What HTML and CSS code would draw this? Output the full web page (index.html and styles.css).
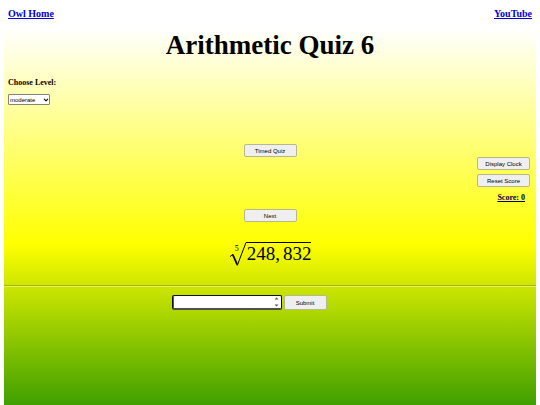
FILE: index.html
```html
<!DOCTYPE html>
<html lang="en">
<head>
<meta charset="utf-8">
<title>Arithmetic Quiz 6</title>
<link rel="stylesheet" href="styles.css">
</head>
<body>
<nav class="top-links">
  <a href="#home">Owl Home</a>
  <a href="#youtube">YouTube</a>
</nav>
<main>
  <h1>Arithmetic Quiz 6</h1>
  <div class="level">
    <label for="level">Choose Level:</label>
    <div class="select-wrap">
      <select id="level"><option>easy</option><option selected>moderate</option><option>hard</option></select>
      <svg class="chevron" viewBox="0 0 6 4" aria-hidden="true"><path d="M1 .8 3 2.8 5 .8"/></svg>
    </div>
  </div>
  <section class="board">
    <div class="quiz">
      <button type="button">Timed Quiz</button>
      <button type="button">Next</button>
    </div>
    <aside class="score-panel">
      <button type="button">Display Clock</button>
      <button type="button">Reset Score</button>
      <p class="score">Score: 0</p>
    </aside>
  </section>
  <div class="problem">
    <div class="root">
      <span class="index">5</span>
      <svg class="radical" viewBox="0 0 18 25" aria-hidden="true"><path class="thin" d="M1 14.6 4 12.2M8.2 23.6 17 .5H18"/><path class="thick" d="M3.8 12.6 8.2 22.6"/></svg>
      <span class="radicand">248,<span class="group">832</span></span>
    </div>
  </div>
  <hr>
  <form class="answer">
    <div class="number-wrap">
      <input type="number" aria-label="Answer">
      <svg class="spinner" viewBox="0 0 5 10" aria-hidden="true"><path d="M.5 2.4 2.5.5 4.5 2.4zM.5 7.6 2.5 9.5 4.5 7.6z"/></svg>
    </div>
    <button type="button">Submit</button>
  </form>
</main>
</body>
</html>
```
FILE: styles.css
```css
* {
  box-sizing: border-box;
}

html {
  min-height: 100%;
  background: #fff;
}

body {
  margin: 0 4px;
  font-family: "Liberation Serif", "Times New Roman", serif;
  font-weight: bold;
  color: #000;
}

.top-links {
  display: flex;
  justify-content: space-between;
  padding: 8px 4px 0;
  height: 28px;
  font-size: 10px;
  line-height: 12px;
}

.top-links a {
  color: #0000d8;
}

main {
  min-height: calc(100vh - 28px);
  background: linear-gradient(#fff 0, #ff0 216px, #008000 430px);
}

h1 {
  margin: 0;
  font-size: 27px;
  line-height: 34px;
  text-align: center;
}

.level {
  padding: 16px 4px 0;
  font-size: 8px;
  line-height: 10px;
}

.level label {
  display: block;
}

.select-wrap {
  position: relative;
  width: 42px;
  margin-top: 6px;
}

select {
  display: block;
  appearance: none;
  width: 100%;
  height: 11px;
  padding: 0 1px;
  border: 1px solid #858575;
  border-radius: 1px;
  background: #fff;
  color: #000;
  font: 6px/8px "Liberation Sans", Arial, sans-serif;
}

.chevron {
  position: absolute;
  top: 4px;
  right: 1px;
  width: 6px;
  height: 4px;
  fill: none;
  stroke: #000;
  stroke-width: 1.1;
}

button {
  width: 53px;
  height: 13px;
  padding: 0;
  border: 1px solid #b8b890;
  border-radius: 2px;
  background: #efefef;
  color: #000;
  font: 6px/8px "Liberation Sans", Arial, sans-serif;
}

.board {
  display: grid;
  grid-template-columns: 1fr auto 1fr;
  padding: 39px 6px 0;
}

.quiz {
  grid-column: 2;
  display: flex;
  flex-direction: column;
  gap: 52px;
}

.score-panel {
  justify-self: end;
  display: flex;
  flex-direction: column;
  gap: 4px;
  padding-top: 13px;
}

.score {
  margin: 2px 5px 0 0;
  font-size: 8px;
  line-height: 10px;
  text-align: right;
  text-decoration: underline;
  color: #000040;
}

.problem {
  display: flex;
  justify-content: center;
  padding-top: 20px;
}

.root {
  position: relative;
  display: flex;
  font-weight: normal;
}

.index {
  position: absolute;
  top: 2px;
  left: 6px;
  font-size: 8px;
  line-height: 10px;
}

.radical {
  width: 18px;
  height: 25px;
  fill: none;
  stroke: #000;
}

.thin {
  stroke-width: 1;
}

.thick {
  stroke-width: 1.7;
}

.radicand {
  height: 24px;
  border-top: 1px solid #000;
  font-size: 19px;
  line-height: 21px;
}

.group {
  margin-left: 3px;
}

hr {
  height: 2px;
  margin: 18px 0 0;
  border: 0;
  border-top: 1px solid #a9b30b;
  border-bottom: 1px solid #e8f05c;
}

.answer {
  display: flex;
  justify-content: center;
  gap: 2px;
  padding: 8px 42px 0 0;
}

.number-wrap {
  position: relative;
  width: 110px;
}

input {
  display: block;
  appearance: textfield;
  width: 100%;
  height: 15px;
  padding: 0 8px 0 2px;
  border: 1px solid #101010;
  border-bottom: 2px solid #505050;
  border-radius: 2px;
  outline: 0;
  background: #fff;
  box-shadow: inset 1px 0 #555;
  font: 6px/8px "Liberation Sans", Arial, sans-serif;
}

input::-webkit-inner-spin-button {
  appearance: none;
}

.spinner {
  position: absolute;
  top: 2px;
  right: 3px;
  width: 5px;
  height: 10px;
  fill: #555;
}

.answer button {
  width: 43px;
  height: 15px;
}
```
